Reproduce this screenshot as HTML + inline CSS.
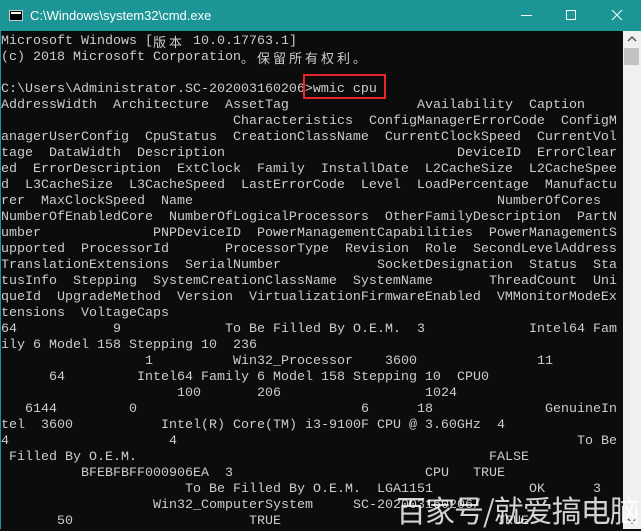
<!DOCTYPE html>
<html><head><meta charset="utf-8"><style>
html,body{margin:0;padding:0;width:641px;height:529px;overflow:hidden;background:#0c0c0c}
#title{position:absolute;left:0;top:0;width:641px;height:31px;background:#1b9595;color:#fff;font:13px "Liberation Sans",sans-serif}
#title .t{position:absolute;left:30px;top:8px}
#ico{position:absolute;left:9px;top:10px;width:14px;height:11px;background:#000;border:1px solid #ccc;box-sizing:border-box}
#ico:after{content:"";position:absolute;left:1px;top:1px;width:10px;height:2px;background:#fff}
#con{position:absolute;left:0;top:31px;width:623px;height:498px;background:#0c0c0c;border-left:1px solid #1b9595;box-sizing:border-box}
#sb{position:absolute;left:623px;top:31px;width:18px;height:498px;background:#f0f0f0}
#thumb{position:absolute;left:1px;top:17px;width:15px;height:17px;background:#c2c2c2}
.tk{position:absolute;white-space:pre;color:#cccccc;font:13.33px "Liberation Mono",monospace;line-height:16px;height:16px}
.cj{display:inline-block;width:16px;font-family:"Noto Sans CJK SC",sans-serif;font-size:13px;line-height:16px;height:16px;vertical-align:top;text-align:left}
#box{position:absolute;left:303px;top:74px;width:83px;height:25px;border:2px solid #e8242c;box-sizing:border-box}
#wm{position:absolute;left:396px;top:487px;font:30px "Noto Sans CJK SC",sans-serif;color:rgba(255,255,255,.82);white-space:nowrap;letter-spacing:-1px}
</style></head><body>
<div id="title"><div id="ico"></div><span class="t">C:\Windows\system32\cmd.exe</span>
<svg style="position:absolute;left:500px;top:0" width="141" height="31"><line x1="21" y1="15.5" x2="32" y2="15.5" stroke="#fff" stroke-width="1"/><rect x="66.5" y="10.5" width="9" height="9" fill="none" stroke="#fff"/><path d="M112 10 L122 20 M122 10 L112 20" stroke="#fff" stroke-width="1"/></svg></div>
<div id="con"></div>
<div id="sb"><svg width="18" height="16"><path d="M5 10 L9 6 L13 10" fill="none" stroke="#555" stroke-width="1.5"/></svg><div id="thumb"></div>
<svg style="position:absolute;left:0;bottom:0" width="18" height="16"><path d="M5 6 L9 10 L13 6" fill="none" stroke="#555" stroke-width="1.5"/></svg></div>
<div id="out"></div>
<div id="box"></div>
<div id="wm">百家号/就爱搞电脑</div>
<script>
var L=[
[[0,"Microsoft Windows ["],[19,"版本"],[23," 10.0.17763.1]"]],
[[0,"(c) 2018 Microsoft Corporation"],[30,"。保留所有权利。"]],
[],
[[0,"C:\\Users\\Administrator.SC-202003160206>wmic cpu"]],
[[0,"AddressWidth  Architecture  AssetTag"],[52,"Availability  Caption"]],
[[29,"Characteristics  ConfigManagerErrorCode  ConfigM"]],
[[0,"anagerUserConfig  CpuStatus  CreationClassName  CurrentClockSpeed  CurrentVol"]],
[[0,"tage  DataWidth  Description"],[57,"DeviceID  ErrorClear"]],
[[0,"ed  ErrorDescription  ExtClock  Family  InstallDate  L2CacheSize  L2CacheSpee"]],
[[0,"d  L3CacheSize  L3CacheSpeed  LastErrorCode  Level  LoadPercentage  Manufactu"]],
[[0,"rer  MaxClockSpeed  Name"],[62,"NumberOfCores"]],
[[0,"NumberOfEnabledCore  NumberOfLogicalProcessors  OtherFamilyDescription  PartN"]],
[[0,"umber"],[19,"PNPDeviceID  PowerManagementCapabilities  PowerManagementS"]],
[[0,"upported  ProcessorId"],[28,"ProcessorType  Revision  Role  SecondLevelAddress"]],
[[0,"TranslationExtensions  SerialNumber"],[47,"SocketDesignation  Status  Sta"]],
[[0,"tusInfo  Stepping  SystemCreationClassName  SystemName"],[61,"ThreadCount  Uni"]],
[[0,"queId  UpgradeMethod  Version  VirtualizationFirmwareEnabled  VMMonitorModeEx"]],
[[0,"tensions  VoltageCaps"]],
[[0,"64"],[14,"9"],[28,"To Be Filled By O.E.M."],[52,"3"],[66,"Intel64 Fam"]],
[[0,"ily 6 Model 158 Stepping 10"],[29,"236"]],
[[18,"1"],[29,"Win32_Processor"],[48,"3600"],[67,"11"]],
[[6,"64"],[17,"Intel64 Family 6 Model 158 Stepping 10"],[57,"CPU0"]],
[[22,"100"],[32,"206"],[53,"1024"]],
[[3,"6144"],[16,"0"],[45,"6"],[52,"18"],[68,"GenuineIn"]],
[[0,"tel  3600"],[20,"Intel(R) Core(TM) i3-9100F CPU @ 3.60GHz"],[62,"4"]],
[[0,"4"],[21,"4"],[72,"To Be"]],
[[1,"Filled By O.E.M."],[61,"FALSE"]],
[[10,"BFEBFBFF000906EA"],[28,"3"],[53,"CPU"],[59,"TRUE"]],
[[23,"To Be Filled By O.E.M."],[47,"LGA1151"],[66,"OK"],[74,"3"]],
[[19,"Win32_ComputerSystem"],[44,"SC-202003160206/"]],
[[7,"50"],[31,"TRUE"],[62,"TRUE"]]
];
var out=document.getElementById('out');
L.forEach(function(line,i){line.forEach(function(t){var s=document.createElement('div');s.className='tk';s.style.left=(1+t[0]*8)+'px';s.style.top=(34+i*16)+'px';
var h='';for(var c of t[1]){if(c.charCodeAt(0)>0x2e80)h+='<span class="cj">'+c+'</span>';else h+=c.replace(/&/g,'&amp;').replace(/</g,'&lt;');}
s.innerHTML=h;out.appendChild(s);});});
</script>
</body></html>
